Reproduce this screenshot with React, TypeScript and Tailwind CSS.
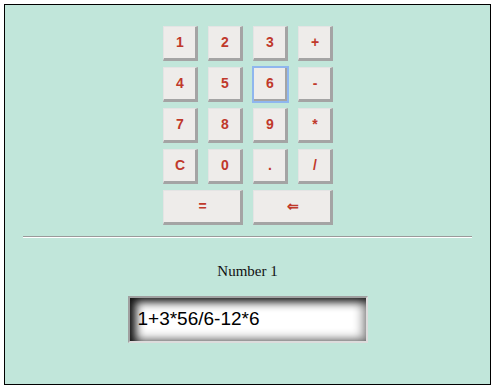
import React from "react";

const keys = ["1", "2", "3", "+", "4", "5", "6", "-", "7", "8", "9", "*", "C", "0", ".", "/"];

function Key({ label, wide, focused }: { label: string; wide?: boolean; focused?: boolean }) {
  return (
    <button
      className={`${wide ? "col-span-2" : ""} h-[35px] pl-[2px] bg-[#eeecea] text-[#c0392b] font-bold text-[14px] border-t-[1px] border-l-[1px] border-r-[3px] border-b-[3px] border-t-[#e4e4e4] border-l-[#e4e4e4] border-r-[#a4a4a4] border-b-[#a4a4a4] flex items-center justify-center ${focused ? "outline outline-2 outline-[#8fb6ee] -outline-offset-1" : ""}`}
      style={{ fontFamily: '"Liberation Sans", Arial, sans-serif' }}
    >
      {label}
    </button>
  );
}

export default function App() {
  return (
    <div className="bg-white w-[497px] h-[391px] pt-[4px] pl-[4px]">
      <div className="w-[487px] h-[381px] border border-black bg-[#c1e6da] flex flex-col items-center pt-[21px]">
        <div className="grid grid-cols-[repeat(4,35px)] gap-x-[10px] gap-y-[6px]">
          {keys.map((k) => (
            <Key key={k} label={k} focused={k === "6"} />
          ))}
          <Key label="=" wide />
          <Key label="⇐" wide />
        </div>
        <div className="w-[449px] mt-[11px] border-t border-t-[#9a9a9a] border-b border-b-white" />
        <div
          className="mt-[24px] text-[15px] text-[#111] leading-[18px]"
          style={{ fontFamily: '"Liberation Serif", "Times New Roman", serif' }}
        >
          Number 1
        </div>
        <div
          className="mt-[16px] w-[240px] h-[47px] border-2 border-t-[#a0a0a0] border-l-[#a0a0a0] border-r-[#dcdcdc] border-b-[#dcdcdc] bg-white shadow-[inset_6px_4px_10px_#111,inset_-4px_-3px_10px_#999] flex items-center pl-[8px] text-[19px] text-black"
          style={{ fontFamily: '"Liberation Sans", Arial, sans-serif' }}
        >
          1+3*56/6-12*6
        </div>
      </div>
    </div>
  );
}
